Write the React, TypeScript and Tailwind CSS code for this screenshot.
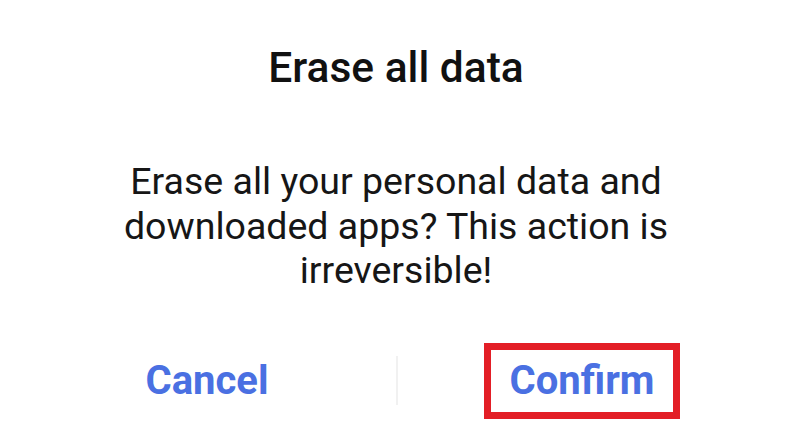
import React from "react";

export default function App() {
  return (
    <div
      className="w-[800px] h-[428px] bg-white flex flex-col pr-[8px] overflow-hidden"
      style={{ fontFamily: "Roboto, 'Noto Sans', sans-serif" }}
    >
      <div className="pt-[44px] text-center text-[42.5px] leading-[48px] font-medium text-[#111111]">
        Erase all data
      </div>
      <div className="mt-[67px] text-center text-[37.5px] leading-[44.5px] font-normal text-[#161616] px-[100px]">
        Erase all your personal data and downloaded apps? This action is irreversible!
      </div>
      <div className="mt-[50px] h-[76px] flex items-center pl-[18px]">
        <div className="w-[378px] flex items-center justify-center h-full">
          <span className="text-[40px] leading-[47px] font-bold text-[#4a70e2]">Cancel</span>
        </div>
        <div className="w-[2px] h-[49px] bg-[#f1f1f1]" />
        <div className="w-[368px] flex items-center justify-center h-full">
          <div className="w-[196px] h-[76px] border-[7px] border-[#e31e26] flex items-center justify-center">
            <span className="text-[40px] leading-[47px] font-bold text-[#4a70e2]">Confirm</span>
          </div>
        </div>
      </div>
    </div>
  );
}
